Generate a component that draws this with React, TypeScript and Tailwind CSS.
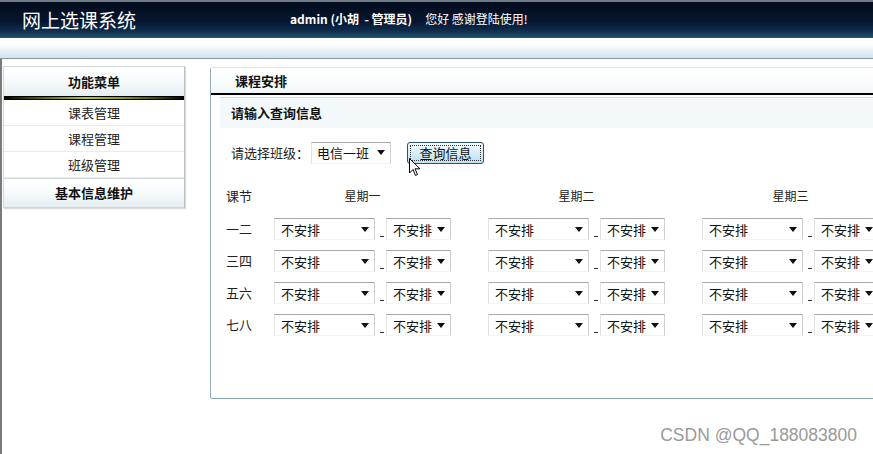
import React from "react";

const CJK = '"Noto Sans CJK SC", "Liberation Sans", sans-serif';

function Select({ w, label }: { w: number; label: string }) {
  return (
    <div
      className="flex items-center justify-between h-[22px] bg-white border-t border-t-[#a8a8a8] border-l border-l-[#e2e2e2] border-r border-r-[#cfcfcf] border-b border-b-[#f3f3f3] pl-[6px] pr-[5px] text-[13px] text-[#111]"
      style={{ width: w }}
    >
      <span className="leading-none">{label}</span>
      <svg width="8" height="5" viewBox="0 0 8 5" className="shrink-0">
        <path d="M0 0 H8 L4 5 Z" fill="#111" />
      </svg>
    </div>
  );
}

function Group() {
  return (
    <div className="flex items-start w-[214px] shrink-0">
      <Select w={101} label="不安排" />
      <div className="w-[4px] h-[1px] bg-[#333] mt-[18px] ml-[5px] mr-[2px]" />
      <Select w={65} label="不安排" />
    </div>
  );
}

export default function App() {
  const rows = ["一二", "三四", "五六", "七八"];
  const days = ["星期一", "星期二", "星期三"];
  return (
    <div
      className="w-[873px] h-[454px] overflow-hidden bg-white relative flex flex-col"
      style={{ fontFamily: CJK }}
    >
      {/* Header */}
      <div className="h-[38px] shrink-0 border-t-2 border-t-[#6e7a86] bg-[linear-gradient(180deg,#020b1c_0%,#061630_55%,#0f2d4c_80%,#245473_100%)] flex items-center">
        <div className="ml-[22px] w-[230px] text-[19px] leading-none text-white mt-[-2px]">
          网上选课系统
        </div>
        <div className="ml-[38px] text-[12px] font-bold text-white mt-[-2px]">
          admin (小胡&nbsp;&nbsp;-&nbsp;管理员)
        </div>
        <div className="ml-[13px] text-[12px] text-white mt-[-2px]">您好 感谢登陆使用!</div>
      </div>
      {/* Sub-strip */}
      <div className="h-[21px] shrink-0 bg-[linear-gradient(180deg,#ffffff_0%,#ffffff_30%,#e6f1f6_65%,#cfe3ee_100%)] border-b border-b-[#8797a0]" />

      {/* Main */}
      <div className="flex-1 flex border-l-2 border-l-[#7a7a7a]">
        {/* Left menu */}
        <div className="w-[183px] shrink-0 pl-[1px] pt-[7px]">
          <div className="border border-[#cfd5d8] border-r-[#b9c1c5] shadow-[1px_1px_1px_#d8dde0]">
            <div className="h-[29px] flex items-center justify-center text-[13px] font-bold text-[#111] bg-[linear-gradient(180deg,#ffffff_0%,#f7fbfc_50%,#e5eef2_100%)]">
              功能菜单
            </div>
            <div className="h-[4px] border-y border-y-black bg-[linear-gradient(90deg,#000_0%,#3d4a00_15%,#b5c23a_45%,#8e9a18_65%,#2a3300_90%,#000_100%)]" />
            {["课表管理", "课程管理", "班级管理"].map((t) => (
              <div
                key={t}
                className="h-[26px] flex items-center justify-center text-[13px] text-[#222] bg-white border-b border-b-[#e6ecef]"
              >
                {t}
              </div>
            ))}
            <div className="h-[29px] flex items-center justify-center text-[13px] font-bold text-[#111] bg-[linear-gradient(180deg,#ffffff_0%,#f7fbfc_50%,#e5eef2_100%)] border-t border-t-[#d0d6d9]">
              基本信息维护
            </div>
          </div>
        </div>

        {/* Content */}
        <div className="flex-1 pl-[25px] pt-[8px]">
          <div className="h-[332px] border-l border-l-[#8fa9b6] border-t border-t-[#e0e6e9] border-b border-b-[#86a6b6] rounded-tl-[3px] rounded-bl-[3px] flex flex-col">
            <div className="h-[25px] shrink-0 flex items-center pl-[24px] text-[13px] font-bold text-[#111] bg-[linear-gradient(180deg,#ffffff_0%,#f9fcfd_60%,#eef6f8_100%)]">
              课程安排
            </div>
            <div className="h-[2px] bg-black shrink-0" />
            <div className="pl-[9px] pt-[2px]">
              <div className="h-[31px] border-t border-t-[#d4dade] bg-[#f3f8fb] flex items-center pl-[11px] text-[13px] font-bold text-[#111]">
                请输入查询信息
              </div>
            </div>
            {/* Query row */}
            <div className="flex items-center mt-[13px] pl-[20px] h-[23px]">
              <span className="text-[13px] text-[#222]">请选择班级：</span>
              <div className="ml-[2px] w-[80px] h-[22px] flex items-center justify-between border-t border-t-[#a8a8a8] border-l border-l-[#e2e2e2] border-r border-r-[#cfcfcf] border-b border-b-[#f3f3f3] pl-[5px] pr-[5px] text-[13px] text-[#111]">
                <span>电信一班</span>
                <svg width="8" height="5" viewBox="0 0 8 5">
                  <path d="M0 0 H8 L4 5 Z" fill="#111" />
                </svg>
              </div>
              <div className="relative ml-[16px]">
                <div className="w-[77px] h-[22px] rounded-[3px] border border-[#2f4f6a] bg-[linear-gradient(180deg,#f4fbfe_0%,#d6eef8_50%,#b9e2f2_100%)] flex items-center justify-center p-[2px]">
                  <div className="w-full h-full border border-dotted border-[#333] flex items-center justify-center text-[13px] text-[#111] leading-none">
                    查询信息
                  </div>
                </div>
                <svg
                  className="absolute left-[2px] top-[16px]"
                  width="12"
                  height="19"
                  viewBox="0 0 12 19"
                >
                  <path
                    d="M0.5 0.5 L0.5 15 L4 11.5 L6.5 17.5 L8.5 16.5 L6 10.8 L11 10.8 Z"
                    fill="#fff"
                    stroke="#000"
                    strokeWidth="1"
                    strokeLinejoin="round"
                  />
                </svg>
              </div>
            </div>
            {/* Table */}
            <div className="mt-[21px] pl-[15px] flex flex-col">
              <div className="flex items-center h-[22px]">
                <div className="w-[48px] text-[13px] text-[#222]">课节</div>
                {days.map((d) => (
                  <div key={d} className="w-[214px] shrink-0 flex">
                    <div className="w-[177px] text-center text-[12px] text-[#222]">{d}</div>
                  </div>
                ))}
              </div>
              <div className="mt-[11px] flex flex-col">
                {rows.map((r) => (
                  <div key={r} className="flex items-start h-[32px]">
                    <div className="w-[48px] h-[22px] flex items-center text-[13px] text-[#222]">{r}</div>
                    <Group />
                    <Group />
                    <Group />
                  </div>
                ))}
              </div>
            </div>
          </div>
        </div>
      </div>

      <div
        className="absolute right-[16px] bottom-[6px] text-[17.5px] text-[#9a9a9a]"
        style={{ fontFamily: '"Liberation Sans", sans-serif' }}
      >
        CSDN @QQ_188083800
      </div>
    </div>
  );
}
